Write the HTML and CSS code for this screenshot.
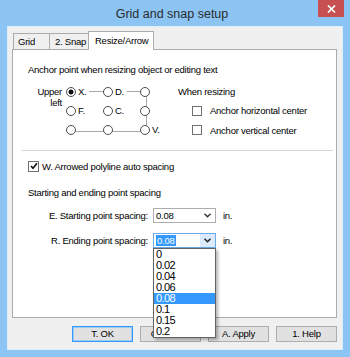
FILE: index.html
```html
<!DOCTYPE html>
<html lang="en">
<head>
  <meta charset="UTF-8" />
  <title>Grid and snap setup</title>
  <link rel="stylesheet" href="styles.css">
</head>
<body>
  <div class="window">
    <div class="titlebar">
      <span></span>
      <div class="title">Grid and snap setup</div>
      <div class="close">
        <svg width="9" height="8" viewBox="0 0 9 8"><path d="M1 0.5 L8 7.5 M8 0.5 L1 7.5" stroke="#fff" stroke-width="1.7"/></svg>
      </div>
    </div>

    <div class="client">
      <div class="tabs">
        <div class="tab tab-grid">Grid</div>
        <div class="tab tab-snap">2. Snap</div>
        <div class="tab active">Resize/Arrow</div>
      </div>

      <div class="panel">
        <div class="line">Anchor point when resizing object or editing text</div>

        <div class="anchor">
          <div class="anchor-left">
            <div class="upper">Upper<br>left</div>
            <div class="points">
              <div class="pt"><span class="radio on"></span><span class="lbl">X.</span></div>
              <div class="pt"><span class="radio"></span><span class="lbl">D.</span></div>
              <div class="pt"><span class="radio"></span></div>
              <div class="pt"><span class="radio"></span><span class="lbl">F.</span></div>
              <div class="pt"><span class="radio"></span><span class="lbl">C.</span></div>
              <div class="pt"><span class="radio"></span></div>
              <div class="pt"><span class="radio"></span></div>
              <div class="pt"><span class="radio"></span></div>
              <div class="pt"><span class="radio"></span><span class="lbl">V.</span></div>
            </div>
          </div>
          <div class="anchor-right">
            <div class="when">When resizing</div>
            <div class="cb-row"><span class="check"></span>Anchor horizontal center</div>
            <div class="cb-row last"><span class="check"></span>Anchor vertical center</div>
          </div>
        </div>

        <div class="sep"></div>

        <div class="auto-row">
          <span class="check">
            <svg width="8" height="8" viewBox="0 0 8 8"><path d="M1 4 L3 6.3 L7 1.2" fill="none" stroke="#111" stroke-width="1.6"/></svg>
          </span>
          W. Arrowed polyline auto spacing
        </div>

        <div class="line group-label">Starting and ending point spacing</div>

        <div class="field">
          <div class="field-label">E. Starting point spacing:</div>
          <div class="combo">
            <span class="value">0.08</span>
            <span class="arrow">
              <svg width="7" height="5" viewBox="0 0 7 5"><path d="M0.5 0.8 L3.5 3.8 L6.5 0.8" fill="none" stroke="#333" stroke-width="1.4"/></svg>
            </span>
          </div>
          <div class="unit">in.</div>
        </div>

        <div class="field second">
          <div class="field-label">R. Ending point spacing:</div>
          <div class="combo open">
            <span class="value"><span class="sel">0.08</span></span>
            <span class="arrow">
              <svg width="7" height="5" viewBox="0 0 7 5"><path d="M0.5 0.8 L3.5 3.8 L6.5 0.8" fill="none" stroke="#222" stroke-width="1.5"/></svg>
            </span>
            <div class="list">
              <div class="item">0</div>
              <div class="item">0.02</div>
              <div class="item">0.04</div>
              <div class="item">0.06</div>
              <div class="item current">0.08</div>
              <div class="item">0.1</div>
              <div class="item">0.15</div>
              <div class="item">0.2</div>
            </div>
          </div>
          <div class="unit">in.</div>
        </div>
      </div>

      <div class="buttons">
        <div class="btn default">T. OK</div>
        <div class="btn">C. Cancel</div>
        <div class="btn">A. Apply</div>
        <div class="btn">1. Help</div>
      </div>
    </div>
  </div>
</body>
</html>
```

FILE: styles.css
```css
* { box-sizing: border-box; }
body {
  margin: 0;
  font-family: "Liberation Sans", Arial, sans-serif;
  color: #000;
}
.window {
  width: 350px; height: 357px;
  background: #8cc5f4;
  display: flex; flex-direction: column;
}

/* title bar */
.titlebar {
  height: 26px; padding-right: 6px;
  display: grid; grid-template-columns: 1fr auto 1fr;
}
.title {
  font-size: 12.5px; line-height: 28px;
  color: #2b2b2b;
}
.close {
  justify-self: end;
  width: 26px; height: 17px;
  background: #c75050;
  display: flex; align-items: center; justify-content: center;
}

/* client area */
.client {
  margin: 0 7px;
  height: 324px;
  border: 1px solid #dceefc;
  background: #f0f0f0;
  padding: 4px 5px 0 4px;
  font-size: 9.5px; letter-spacing: -0.25px;
}

/* tabs */
.tabs {
  display: flex; align-items: flex-end;
  height: 19px; padding-left: 1px;
  margin-bottom: -1px;
  position: relative; z-index: 1;
}
.tab {
  height: 16px; margin-bottom: 1px;
  border: 1px solid #acacac; border-bottom: none;
  background: #f0f0f0;
  line-height: 16px; padding-left: 4px;
}
.tab-grid { width: 37px; }
.tab-snap { width: 40px; margin-left: -1px; padding-left: 5px; }
.tab.active {
  width: 66px; height: 19px; margin: 0 0 0 -1px;
  background: #fff;
  line-height: 17px; padding-left: 6px;
}

/* panel */
.panel {
  height: 269px;
  border: 1px solid #acacac;
  background: #fff;
  padding: 14px 0 0 15px;
}
.line { line-height: 12px; }

.anchor { display: flex; margin-top: 6px; }
.anchor-left { width: 150px; display: flex; }
.upper {
  width: 34px; text-align: right;
  line-height: 11px; padding-top: 3.5px;
}
.points {
  margin-left: 4px;
  display: grid;
  grid-template-columns: 37px 37px 30px;
  grid-auto-rows: 19px;
  position: relative;
}
.points::before {
  content: "";
  position: absolute; left: 5px; top: 9px;
  width: 75px; height: 39px;
  border: 1px solid #a8a8a8; border-left: none;
}
.pt { display: flex; align-items: center; position: relative; z-index: 1; }
.radio {
  width: 10px; height: 10px; border-radius: 50%;
  border: 1px solid #4d4d4d;
  background: #fff;
}
.radio.on { background: radial-gradient(circle, #111 0 2.2px, #fff 2.8px); }
.lbl { background: #fff; padding: 0 3px 0 2px; line-height: 12px; }

.anchor-right { padding-top: 0; }
.when { line-height: 19px; }
.cb-row {
  display: flex; align-items: center; gap: 8px;
  height: 19px; padding-left: 14px;
}
.cb-row.last { height: 20px; }
.check {
  width: 10px; height: 10px;
  border: 1px solid #707070;
  background: #fff;
  display: flex; align-items: center; justify-content: center;
}

.sep {
  height: 1px; background: #d5d5d5;
  margin: 10px 3px 0 -6px;
}
.auto-row {
  display: flex; align-items: center; gap: 3px;
  height: 12px; margin-top: 9px;
}
.auto-row .check { width: 11px; height: 11px; }
.group-label { margin-top: 15px; }

.field {
  display: flex; align-items: center;
  height: 15px; margin-top: 9px;
}
.field.second { margin-top: 10px; }
.field-label { width: 120px; text-align: right; }
.combo {
  width: 63px; height: 15px; margin-left: 5px;
  border: 1px solid #abadb3;
  background: #fff;
  display: flex; align-items: center;
  position: relative;
}
.value { flex: 1; padding-left: 2px; }
.arrow {
  width: 15px; height: 100%;
  display: flex; align-items: center; justify-content: center;
}
.combo.open { border-color: #6aaae8; }
.combo.open .arrow { background: #dbebfb; }
.sel { background: #3399ff; color: #fff; padding: 0 1px; }
.unit { margin-left: 7px; }

/* dropdown list */
.list {
  position: absolute; left: -1px; top: calc(100% + 1px);
  width: 63px;
  border: 1px solid #646464;
  background: #fff;
  box-shadow: 2px 2px 3px rgba(0,0,0,0.3);
  font-size: 11px; letter-spacing: -0.6px;
  z-index: 5;
}
.item { line-height: 11px; height: 11px; padding-left: 2px; }
.item.current { background: #3399ff; color: #fff; }

/* buttons */
.buttons {
  display: flex; justify-content: flex-end; gap: 7px;
  margin-top: 8px;
}
.btn {
  width: 61px; height: 16px;
  border: 1px solid #adadad;
  background: #e1e1e1;
  text-align: center; line-height: 14px;
}
.btn.default { border-color: #3399ff; box-shadow: inset 0 0 0 1px #9ccbf5; }
```
